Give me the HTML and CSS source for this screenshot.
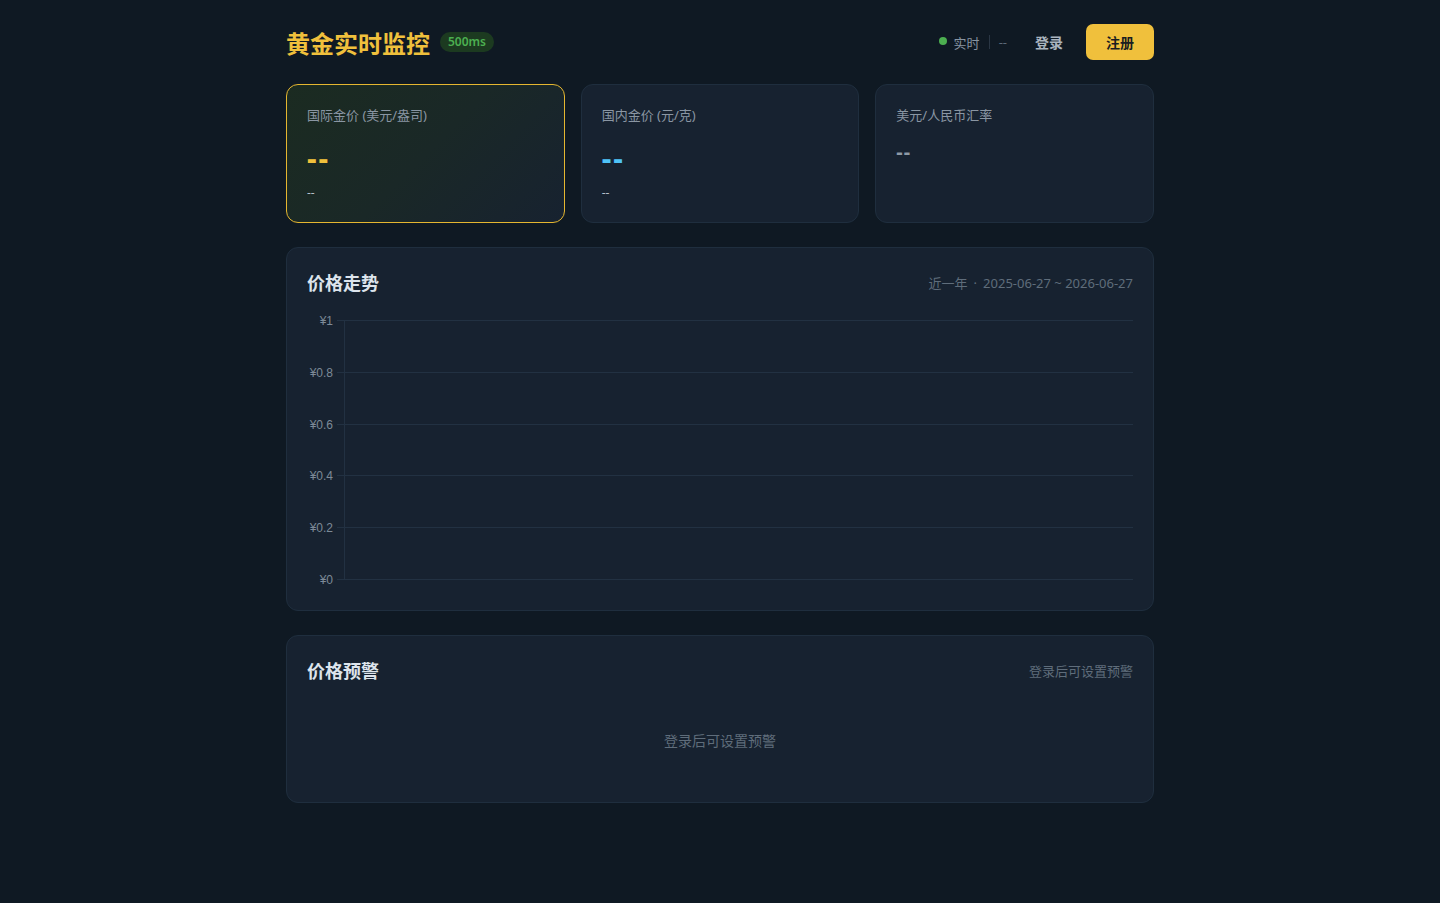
FILE: index.html
```html
<!DOCTYPE html>
<html>
<head>
    <title>黄金实时监控</title>
    <link rel="stylesheet" href="styles.css">
</head>
<body>
    <div class="page">
        <header class="topbar">
            <div class="brand">
                <h1>黄金实时监控</h1>
                <span class="badge">500ms</span>
            </div>
            <div class="actions">
                <span class="status"><i class="dot"></i>实时</span>
                <span class="sep"></span>
                <span class="updated">--</span>
                <button type="button" class="btn-login">登录</button>
                <button type="button" class="btn-register">注册</button>
            </div>
        </header>

        <section class="quotes">
            <div class="quote quote-gold">
                <div class="quote-label">国际金价 (美元/盎司)</div>
                <div class="quote-value gold">--</div>
                <div class="quote-sub">--</div>
            </div>
            <div class="quote">
                <div class="quote-label">国内金价 (元/克)</div>
                <div class="quote-value blue">--</div>
                <div class="quote-sub">--</div>
            </div>
            <div class="quote">
                <div class="quote-label">美元/人民币汇率</div>
                <div class="quote-value small">--</div>
            </div>
        </section>

        <section class="panel">
            <div class="panel-head">
                <h2>价格走势</h2>
                <span class="panel-meta">近一年<span class="meta-dot">·</span>2025-06-27 ~ 2026-06-27</span>
            </div>
            <svg class="chart" width="826" height="280" viewBox="0 0 826 280">
                <g class="grid">
                    <line x1="30" y1="10.5" x2="826" y2="10.5"/>
                    <line x1="30" y1="62.5" x2="826" y2="62.5"/>
                    <line x1="30" y1="114.5" x2="826" y2="114.5"/>
                    <line x1="30" y1="165.5" x2="826" y2="165.5"/>
                    <line x1="30" y1="217.5" x2="826" y2="217.5"/>
                    <line x1="30" y1="269.5" x2="826" y2="269.5"/>
                    <line x1="37.5" y1="10" x2="37.5" y2="269"/>
                </g>
                <g class="axis">
                    <text x="26" y="14.5">¥1</text>
                    <text x="26" y="66.5">¥0.8</text>
                    <text x="26" y="118.5">¥0.6</text>
                    <text x="26" y="169.5">¥0.4</text>
                    <text x="26" y="221.5">¥0.2</text>
                    <text x="26" y="273.5">¥0</text>
                </g>
            </svg>
        </section>

        <section class="panel">
            <div class="panel-head">
                <h2>价格预警</h2>
                <span class="panel-meta">登录后可设置预警</span>
            </div>
            <div class="empty">登录后可设置预警</div>
        </section>
    </div>
</body>
</html>
```

FILE: styles.css
```css
body {
    margin: 0;
    background: #0f1923;
    color: #d7dee6;
    font-family: "Noto Sans", "Noto Sans CJK SC", sans-serif;
}
.page {
    width: 868px;
    margin: 0 auto;
    padding: 24px 0 40px;
}
.topbar {
    display: flex;
    justify-content: space-between;
    align-items: center;
    height: 36px;
    margin-bottom: 24px;
}
.brand {
    display: flex;
    align-items: center;
    gap: 10px;
}
.brand h1 {
    margin: 0;
    font-size: 24px;
    font-weight: 700;
    color: #f0c03c;
    line-height: 36px;
    position: relative;
    top: 2px;
}
.badge {
    background: #1c3a20;
    color: #4caf50;
    font-size: 12px;
    font-weight: 600;
    padding: 2px 8px;
    border-radius: 10px;
    line-height: 16px;
}
.actions {
    display: flex;
    align-items: center;
    font-size: 13px;
    color: #7f8c99;
}
.status {
    display: flex;
    align-items: center;
    gap: 7px;
    color: #8895a2;
}
.dot {
    width: 8px;
    height: 8px;
    border-radius: 50%;
    background: #4caf50;
    margin-top: -3px;
}
.sep {
    width: 1px;
    height: 14px;
    background: #2a3644;
    margin: 0 9px;
}
.updated {
    color: #5c6977;
    margin-right: 16px;
}
.btn-login {
    background: none;
    border: none;
    color: #aab4bf;
    font-family: inherit;
    font-size: 14px;
    font-weight: 700;
    padding: 8px 12px;
    margin-right: 11px;
    cursor: pointer;
}
.btn-register {
    background: #f0c03c;
    border: none;
    border-radius: 7px;
    color: #1a1d21;
    font-family: inherit;
    font-size: 14px;
    font-weight: 700;
    width: 68px;
    height: 36px;
    cursor: pointer;
}
.quotes {
    display: grid;
    grid-template-columns: repeat(3, 1fr);
    gap: 16px;
    margin-bottom: 24px;
}
.quote {
    background: #172230;
    border: 1px solid #1f2e3e;
    border-radius: 12px;
    padding: 20px;
}
.quote-gold {
    border-color: #e5b630;
    background: linear-gradient(135deg, #1b2b21 0%, #1a2827 50%, #172230 100%);
}
.quote-label {
    font-size: 13px;
    color: #8a96a3;
    line-height: 20px;
}
.quote-value {
    font-size: 30px;
    font-weight: 700;
    line-height: 36px;
    margin-top: 15px;
    letter-spacing: 2px;
}
.quote-value.gold { color: #f0c03c; }
.quote-value.blue { color: #4fc3f7; }
.quote-value.small {
    font-size: 20px;
    line-height: 28px;
    color: #8e9aa6;
    margin-top: 13px;
    letter-spacing: 1px;
}
.quote-sub {
    font-size: 12px;
    color: #b4bec8;
    line-height: 18px;
    margin-top: 8px;
}
.panel {
    background: #172230;
    border: 1px solid #1f2e3e;
    border-radius: 12px;
    padding: 20px;
    margin-bottom: 24px;
}
.panel-head {
    display: flex;
    justify-content: space-between;
    align-items: center;
    height: 28px;
}
.panel-head h2 {
    margin: 0;
    font-size: 18px;
    font-weight: 700;
    color: #dde4ec;
}
.panel-meta {
    font-size: 13px;
    color: #5f6d7b;
}
.meta-dot {
    margin: 0 6px;
}
.chart {
    display: block;
    margin-top: 14px;
}
.grid line {
    stroke: #223142;
    stroke-width: 1;
}
.axis text {
    font-family: "Liberation Sans", Arial, sans-serif;
    font-size: 12px;
    fill: #7d8a97;
    text-anchor: end;
}
.empty {
    text-align: center;
    font-size: 14px;
    color: #5f6d7b;
    line-height: 20px;
    padding: 47px 0 31px;
}
```
